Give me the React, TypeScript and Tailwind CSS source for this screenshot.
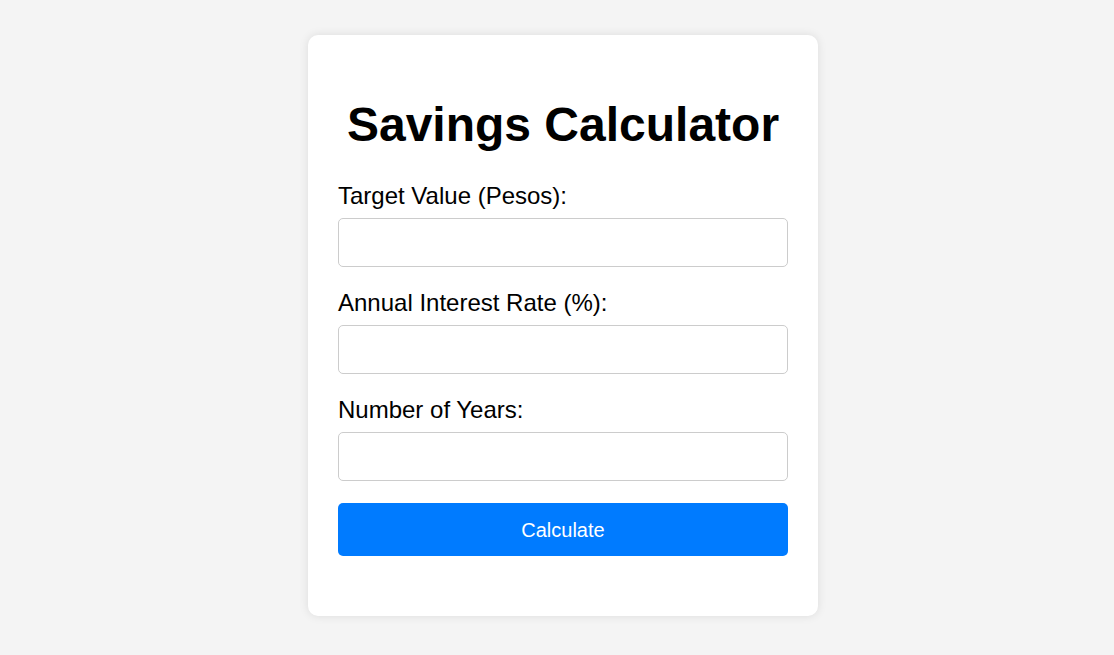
export default function App() {
  const fields = ["Target Value (Pesos):", "Annual Interest Rate (%):", "Number of Years:"];

  return (
    <div
      className="min-h-[655px] bg-[#f4f4f4] pt-[35px] pl-3 flex justify-center items-start"
      style={{ fontFamily: '"Liberation Sans", Arial, sans-serif' }}
    >
      <div className="w-[510px] bg-white rounded-[10px] shadow-[0_0_10px_rgba(0,0,0,0.1)] px-[30px] pt-[30px] pb-[60px]">
        <h1 className="mt-[32px] mb-[30px] text-center text-[48px] leading-[55px] font-bold text-black">
          Savings Calculator
        </h1>
        {fields.map((f) => (
          <div key={f} className="mb-[22px]">
            <label className="block text-[24px] leading-[28px] text-black mb-[8px]">{f}</label>
            <input
              type="number"
              className="block w-full h-[49px] border border-[#cccccc] rounded-[5px] px-2 outline-none"
            />
          </div>
        ))}
        <button
          type="button"
          className="w-full h-[53px] bg-[#007bff] text-white text-[20px] rounded-[5px]"
        >
          Calculate
        </button>
      </div>
    </div>
  );
}
